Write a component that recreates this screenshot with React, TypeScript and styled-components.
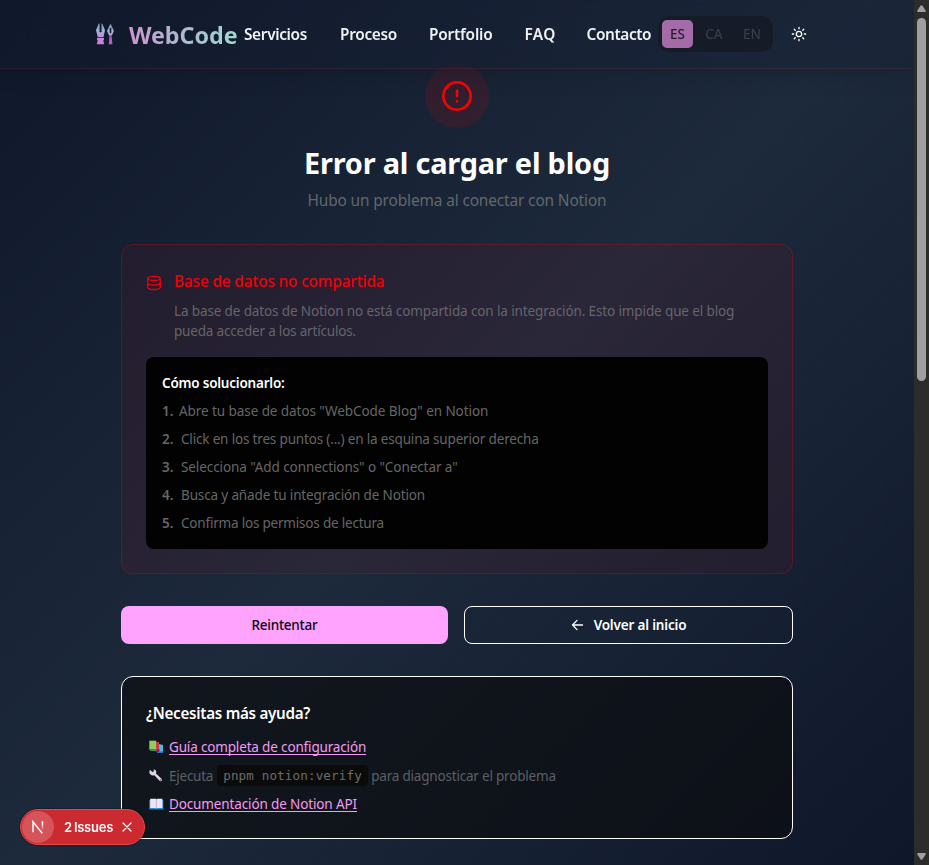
import React from "react";
import styled, { createGlobalStyle, css } from "styled-components";

const GlobalStyle = createGlobalStyle`
  *, *::before, *::after { box-sizing: border-box; }
  body { margin: 0; background: #0f172a; font-family: "Noto Sans", "Open Sans", sans-serif; }
  h1, h2, h3, p, ol, ul { margin: 0; padding: 0; font-weight: inherit; }
  ol, ul { list-style: none; }
  button { font: inherit; border: 0; padding: 0; cursor: pointer; }
`;

const Window = styled.div`
  display: grid;
  grid-template-columns: 1fr 15px;
  height: 865px;
  overflow: hidden;
`;

const Page = styled.div`
  height: 865px;
  overflow: hidden;
  color: #fff;
  background:
    radial-gradient(circle at 1px 1px, rgba(255, 255, 255, 0.012) 1px, transparent 0) 0 0 / 20px 20px,
    linear-gradient(135deg, #0f172a 0%, #1d2a3c 50%, #0f172a 100%);
`;

const Header = styled.header`
  position: relative;
  z-index: 2;
  display: flex;
  align-items: center;
  height: 69px;
  padding-left: 95px;
  background: rgba(20, 27, 46, 0.25);
  border-bottom: 1px solid rgba(255, 40, 40, 0.12);
  box-shadow: 0 6px 20px rgba(0, 0, 0, 0.14);
  backdrop-filter: blur(16px);
`;

const Brand = styled.a`
  display: flex;
  align-items: center;
  width: 149px;
  gap: 14px;
`;

const Tracked = css<{ $ls?: number }>`
  letter-spacing: ${(p) => p.$ls ?? -0.12}px;
  white-space: nowrap;
`;

const BrandName = styled.span`
  padding-top: 2px;
  font-size: 23.3px;
  line-height: 32px;
  font-weight: 700;
  letter-spacing: -0.05px;
  color: transparent;
  background: linear-gradient(90deg, #cc98cc, #a9c0d2 62%, #9fdccd);
  background-clip: text;
  -webkit-background-clip: text;
`;

const Nav = styled.nav`
  display: flex;
  padding-top: 2px;
`;

const NavLink = styled.a<{ $ls?: number; $w: number }>`
  ${Tracked}
  width: ${(p) => p.$w}px;
  color: #f0f1f3;
  font-size: 15.4px;
  line-height: 24px;
  font-weight: 640;
`;

const Languages = styled.div`
  display: flex;
  gap: 7px;
  height: 36px;
  width: 115px;
  padding: 4px;
  border-radius: 12px;
  background: #151b27;
`;

const Language = styled.button<{ $active?: boolean }>`
  width: 31px;
  height: 28px;
  border-radius: 5px;
  font-size: 13.5px;
  line-height: 28px;
  font-weight: 540;
  letter-spacing: 0;
  text-indent: ${(p) => (p.$active ? 0 : -3)}px;
  color: ${(p) => (p.$active ? "#241a2b" : "#3a3e46")};
  background: ${(p) => (p.$active ? "#a56ba8" : "transparent")};
`;

const ThemeToggle = styled.button`
  display: flex;
  margin-left: 18px;
  color: #fff;
  background: none;
`;

const Main = styled.main`
  display: flex;
  flex-direction: column;
  width: 672px;
  margin: -5px auto 0;
`;

const AlertBadge = styled.div`
  display: grid;
  place-items: center;
  align-self: center;
  width: 64px;
  height: 64px;
  border-radius: 50%;
  background: rgba(255, 0, 0, 0.11);
`;

const Title = styled.h1`
  margin-top: 17px;
  text-align: center;
  font-size: 28.9px;
  line-height: 36px;
  font-weight: 700;
  letter-spacing: -0.21px;
`;

const Subtitle = styled.p`
  margin-top: 8px;
  text-align: center;
  color: #64676c;
  font-size: 15.4px;
  line-height: 24px;
  letter-spacing: -0.12px;
`;

const ErrorCard = styled.section`
  margin-top: 31px;
  height: 330px;
  padding: 24px;
  border: 1px solid rgba(255, 0, 0, 0.24);
  border-radius: 12px;
  background: rgba(255, 0, 0, 0.06);
`;

const ErrorSummary = styled.div`
  display: flex;
  gap: 12px;
  height: 88px;
`;

const IconSlot = styled.span`
  display: flex;
  margin-top: 6px;
  height: 16px;
`;

const ErrorTitle = styled.h2`
  padding-top: 1px;
  color: #ef0006;
  font-size: 15.4px;
  line-height: 24px;
  font-weight: 540;
  letter-spacing: -0.15px;
`;

const ErrorText = styled.p<{ $ls?: number }>`
  ${Tracked}
  color: #66646b;
  font-size: 13.5px;
  line-height: 20px;
`;

const ErrorBody = styled.div`
  margin-top: 7px;
`;

const Steps = styled.div`
  height: 192px;
  padding: 16px;
  border-radius: 8px;
  background: #020202;
`;

const StepsTitle = styled.h3`
  font-size: 13.5px;
  line-height: 20px;
  font-weight: 620;
  letter-spacing: -0.21px;
`;

const Step = styled.li`
  display: flex;
  gap: 8px;
  margin-top: 8px;
  color: #666;
  font-size: 13.5px;
  line-height: 20px;
`;

const StepNumber = styled.span<{ $narrow?: boolean }>`
  width: ${(p) => (p.$narrow ? 9 : 11)}px;
  font-weight: 600;
  letter-spacing: -0.1px;
`;

const StepText = styled.span<{ $ls?: number }>`
  ${Tracked}
`;

const Actions = styled.div`
  display: grid;
  grid-template-columns: 327px 329px;
  gap: 16px;
  margin-top: 32px;
`;

const Action = styled.button<{ $primary?: boolean }>`
  display: flex;
  align-items: center;
  justify-content: center;
  gap: 10px;
  height: 38px;
  border-radius: 8px;
  border: ${(p) => (p.$primary ? "0" : "1px solid #fff")};
  background: ${(p) => (p.$primary ? "#ffa3ff" : "transparent")};
  color: ${(p) => (p.$primary ? "#0a0a0a" : "#fff")};
  font-size: 13.5px;
  line-height: 20px;
  font-weight: ${(p) => (p.$primary ? 520 : 620)};
  letter-spacing: ${(p) => (p.$primary ? -0.24 : -0.17)}px;
`;

const HelpCard = styled.section`
  margin-top: 32px;
  height: 163px;
  padding: 24px;
  border: 1px solid #fff;
  border-radius: 12px;
  background: rgba(10, 10, 10, 0.6);
`;

const HelpTitle = styled.h3`
  margin-bottom: 12px;
  font-size: 15.2px;
  line-height: 24px;
  font-weight: 620;
  letter-spacing: -0.28px;
`;

const HelpRow = styled.li<{ $h: number }>`
  display: flex;
  align-items: center;
  height: ${(p) => p.$h}px;
  padding-left: 3px;
  color: #5c5f64;
  font-size: 13.5px;
`;

const HelpIcon = styled.span`
  display: flex;
  width: 20px;
`;

const HelpLink = styled.a<{ $ls?: number }>`
  ${Tracked}
  color: #f39af3;
  text-decoration: underline;
  text-underline-offset: 1.5px;
  text-decoration-thickness: 1px;
  text-decoration-skip-ink: none;
`;

const HelpText = styled.span<{ $ls?: number }>`
  ${Tracked}
`;

const Code = styled.code`
  margin: 0 3px 0 4px;
  width: 151px;
  height: 21px;
  padding: 0 6px;
  border-radius: 4px;
  background: #0b0b0b;
  color: #6b6b6b;
  font-family: "DejaVu Sans Mono", monospace;
  font-size: 12.6px;
  line-height: 21px;
  letter-spacing: 0.12px;
  white-space: nowrap;
`;

const IssuesPill = styled.div`
  position: fixed;
  left: 20px;
  top: 809px;
  z-index: 5;
  display: flex;
  align-items: center;
  width: 125px;
  height: 36px;
  padding: 1px;
  border: 1px solid #e5484d;
  border-radius: 18px;
  background: #ca2a30;
  box-shadow: 0 0 0 1px rgba(0, 0, 0, 0.25);
`;

const IssuesLogo = styled.span`
  display: grid;
  place-items: center;
  width: 32px;
  height: 32px;
  border-radius: 50%;
  background: rgba(255, 255, 255, 0.2);
`;

const IssuesLabel = styled.span`
  margin-left: 10px;
  width: 58px;
  color: #fff;
  font-family: Inter, sans-serif;
  font-size: 13px;
  line-height: 20px;
  font-weight: 640;
  letter-spacing: -0.25px;
  word-spacing: -1px;
  white-space: nowrap;
`;

const Scrollbar = styled.div`
  display: flex;
  flex-direction: column;
  align-items: center;
  padding: 5px 0 5px;
  background: #2c2c2c;
`;

const Thumb = styled.div`
  width: 9px;
  height: 363px;
  margin: 6px 0 auto;
  border-radius: 5px;
  background: #9f9f9f;
`;

const Arrow = ({ down }: { down?: boolean }) => (
  <svg width="9" height="7" viewBox="0 0 9 7">
    <path
      d={down ? "M1 0h7q1.3.3.6 1.5L5.5 6.3q-1 1-2 0L.4 1.5Q-.3.3 1 0z" : "M1 7h7q1.3-.3.6-1.5L5.5.7q-1-1-2 0L.4 5.5Q-.3 6.7 1 7z"}
      fill="#9f9f9f"
    />
  </svg>
);

const PenLogo = () => (
  <svg width="20" height="22" viewBox="0 0 20 22">
    <defs>
      <linearGradient id="pen" x1="0" y1="0" x2="0" y2="22" gradientUnits="userSpaceOnUse">
        <stop offset="0" stopColor="#5f9c9c" />
        <stop offset=".35" stopColor="#a3b0e2" />
        <stop offset=".7" stopColor="#c48ae0" />
        <stop offset="1" stopColor="#cf78d6" />
      </linearGradient>
    </defs>
    <path d="M3.600.5 1 7.300l1.800 6.900h5.600L10 7.300 7.300.5l-.8.300v6.700a1.200 1.200 0 1 1-1.900 0V.800z" fill="url(#pen)" />
    <path d="M2 15h7v1.600l-.7.900.9 3.700H1.800l.9-3.700-.7-.9z" fill="url(#pen)" />
    <path d="M15.500.5 12 8l2.200 4.800h2.600L18.900 8z" fill="url(#pen)" />
    <path d="M15.500 5.500v3.800" stroke="#141d31" strokeWidth="1.700" strokeLinecap="round" />
    <path d="M14.400 13.200h2.200l.8 8h-3.600z" fill="#b65fc0" />
  </svg>
);

const Sun = () => (
  <svg width="16" height="16" viewBox="0 0 24 24" fill="none" stroke="currentColor" strokeWidth="2" strokeLinecap="round">
    <circle cx="12" cy="12" r="4" />
    <path d="M12 2v2M12 20v2M4.930 4.930l1.410 1.410M17.660 17.660l1.410 1.410M2 12h2M20 12h2M6.340 17.660l-1.410 1.410M19.070 4.930l-1.410 1.410" />
  </svg>
);

const AlertIcon = () => (
  <svg width="36" height="36" viewBox="0 0 24 24" fill="none" stroke="#ff0000" strokeWidth="1.700" strokeLinecap="round">
    <circle cx="12" cy="12" r="9.100" />
    <path d="M12 8.500v3.500M12 15.500v.01" />
  </svg>
);

const DatabaseIcon = () => (
  <svg width="16" height="16" viewBox="0 0 16 16" fill="none" stroke="#f00006" strokeWidth="1.300">
    <ellipse cx="8" cy="3.400" rx="6.300" ry="2.100" />
    <path d="M1.700 3.400v8.900c0 1.300 2.500 2.200 6.300 2.200s6.300-.9 6.300-2.200V3.400M1.700 7.900C1.700 9.200 4.200 10 8 10s6.300-.8 6.300-2.100" />
  </svg>
);

const ArrowLeft = () => (
  <svg width="13" height="14" viewBox="0 0 13 14" fill="none" stroke="#fff" strokeWidth="1.300" strokeLinecap="round" strokeLinejoin="round">
    <path d="M6 2.400 1.500 7 6 11.600M1.500 7h10" />
  </svg>
);

const Books = () => (
  <svg width="15" height="14" viewBox="0 0 15 14">
    <path d="M8 3.500 14 5v8H8z" fill="#4bb8e8" />
    <path d="M8 11.500h6V13H8z" fill="#2c6fb5" />
    <path d="M5 2h5v9.500l-2 .8L5 10z" fill="#d8284c" />
    <path d="M6 10.500 10.500 9v2.500L8 12.300z" fill="#8d1e3f" />
    <path d="M.3.700h6.900v8.800H.3z" fill="#8fd05c" />
    <path d="M.3 9.200h6.900v1.900H1.300z" fill="#3c8e52" />
  </svg>
);

const Wrench = () => (
  <svg width="14" height="13" viewBox="0 0 14 13">
    <path d="M1 .8 3.200 3 4.800 2.600 4.600.6C7 .6 7.800 2.800 7 4.500l5.800 5.600c1 1.300-.7 2.900-2 1.800L5.300 6.200C3.300 7 .3 5.800.3 3z" fill="#dcd3e6" />
    <circle cx="11.700" cy="11" r=".8" fill="#55505e" />
  </svg>
);

const OpenBook = () => (
  <svg width="15" height="12" viewBox="0 0 15 12">
    <path d="M.3 2h14v9.500H.3z" fill="#2f86d4" />
    <path d="M1.200.8h5.500l.6.600.6-.6h5.500V10H8l-.7.500-.6-.5H1.200z" fill="#ece6f4" />
    <path d="M7.300 1.400v9" stroke="#b7a9cc" strokeWidth=".8" />
  </svg>
);

const NextMark = () => (
  <svg width="14" height="14" viewBox="0 0 14 14" fill="none">
    <defs>
      <linearGradient id="stem" x1="0" y1="0" x2="0" y2="1">
        <stop offset=".3" stopColor="#fff" />
        <stop offset="1" stopColor="#fff" stopOpacity="0" />
      </linearGradient>
    </defs>
    <path d="M2 12.300V1.800l9.300 11.600" stroke="#fff" strokeWidth="1.500" />
    <path d="M10.700 1.200h1.500v9h-1.500z" fill="url(#stem)" />
  </svg>
);

const CloseIcon = () => (
  <svg width="10" height="10" viewBox="0 0 10 10" stroke="#fff" strokeWidth="1.200" strokeLinecap="round">
    <path d="M1 1l8 8M9 1L1 9" />
  </svg>
);

const links = [
  { label: "Servicios", w: 96, ls: -0.34 },
  { label: "Proceso", w: 89, ls: -0.3 },
  { label: "Portfolio", w: 95.5, ls: -0.2 },
  { label: "FAQ", w: 62, ls: 0.4 },
  { label: "Contacto", w: 71.5, ls: -0.4 },
];

const steps = [
  { text: 'Abre tu base de datos "WebCode Blog" en Notion', ls: -0.07 },
  { text: "Click en los tres puntos (...) en la esquina superior derecha", ls: -0.17 },
  { text: 'Selecciona "Add connections" o "Conectar a"', ls: -0.08 },
  { text: "Busca y añade tu integración de Notion", ls: -0.14 },
  { text: "Confirma los permisos de lectura", ls: -0.2 },
];

export default function App() {
  return (
    <>
      <GlobalStyle />
      <Window>
        <Page>
          <Header>
            <Brand>
              <PenLogo />
              <BrandName>WebCode</BrandName>
            </Brand>
            <Nav>
              {links.map((l) => (
                <NavLink key={l.label} $w={l.w} $ls={l.ls}>{l.label}</NavLink>
              ))}
            </Nav>
            <Languages>
              <Language $active>ES</Language>
              <Language>CA</Language>
              <Language>EN</Language>
            </Languages>
            <ThemeToggle aria-label="Tema"><Sun /></ThemeToggle>
          </Header>
          <Main>
            <AlertBadge><AlertIcon /></AlertBadge>
            <Title>Error al cargar el blog</Title>
            <Subtitle>Hubo un problema al conectar con Notion</Subtitle>
            <ErrorCard>
              <ErrorSummary>
                <IconSlot><DatabaseIcon /></IconSlot>
                <div>
                  <ErrorTitle>Base de datos no compartida</ErrorTitle>
                  <ErrorBody>
                    <ErrorText $ls={-0.125}>
                      La base de datos de Notion no está compartida con la integración. Esto impide que el blog
                    </ErrorText>
                    <ErrorText $ls={-0.19}>pueda acceder a los artículos.</ErrorText>
                  </ErrorBody>
                </div>
              </ErrorSummary>
              <Steps>
                <StepsTitle>Cómo solucionarlo:</StepsTitle>
                <ol>
                  {steps.map((s, i) => (
                    <Step key={s.text}>
                      <StepNumber $narrow={i === 0}>{i + 1}.</StepNumber>
                      <StepText $ls={s.ls}>{s.text}</StepText>
                    </Step>
                  ))}
                </ol>
              </Steps>
            </ErrorCard>
            <Actions>
              <Action $primary>Reintentar</Action>
              <Action><ArrowLeft />Volver al inicio</Action>
            </Actions>
            <HelpCard>
              <HelpTitle>¿Necesitas más ayuda?</HelpTitle>
              <ul>
                <HelpRow $h={20}>
                  <HelpIcon><Books /></HelpIcon>
                  <HelpLink $ls={-0.16}>Guía completa de configuración</HelpLink>
                </HelpRow>
                <HelpRow $h={37}>
                  <HelpIcon><Wrench /></HelpIcon>
                  <HelpText $ls={-0.24}>Ejecuta</HelpText>
                  <Code>pnpm notion:verify</Code>
                  <HelpText $ls={-0.2}>para diagnosticar el problema</HelpText>
                </HelpRow>
                <HelpRow $h={20}>
                  <HelpIcon><OpenBook /></HelpIcon>
                  <HelpLink $ls={-0.13}>Documentación de Notion API</HelpLink>
                </HelpRow>
              </ul>
            </HelpCard>
          </Main>
        </Page>
        <Scrollbar>
          <Arrow />
          <Thumb />
          <Arrow down />
        </Scrollbar>
      </Window>
      <IssuesPill>
        <IssuesLogo><NextMark /></IssuesLogo>
        <IssuesLabel>2 Issues</IssuesLabel>
        <CloseIcon />
      </IssuesPill>
    </>
  );
}
